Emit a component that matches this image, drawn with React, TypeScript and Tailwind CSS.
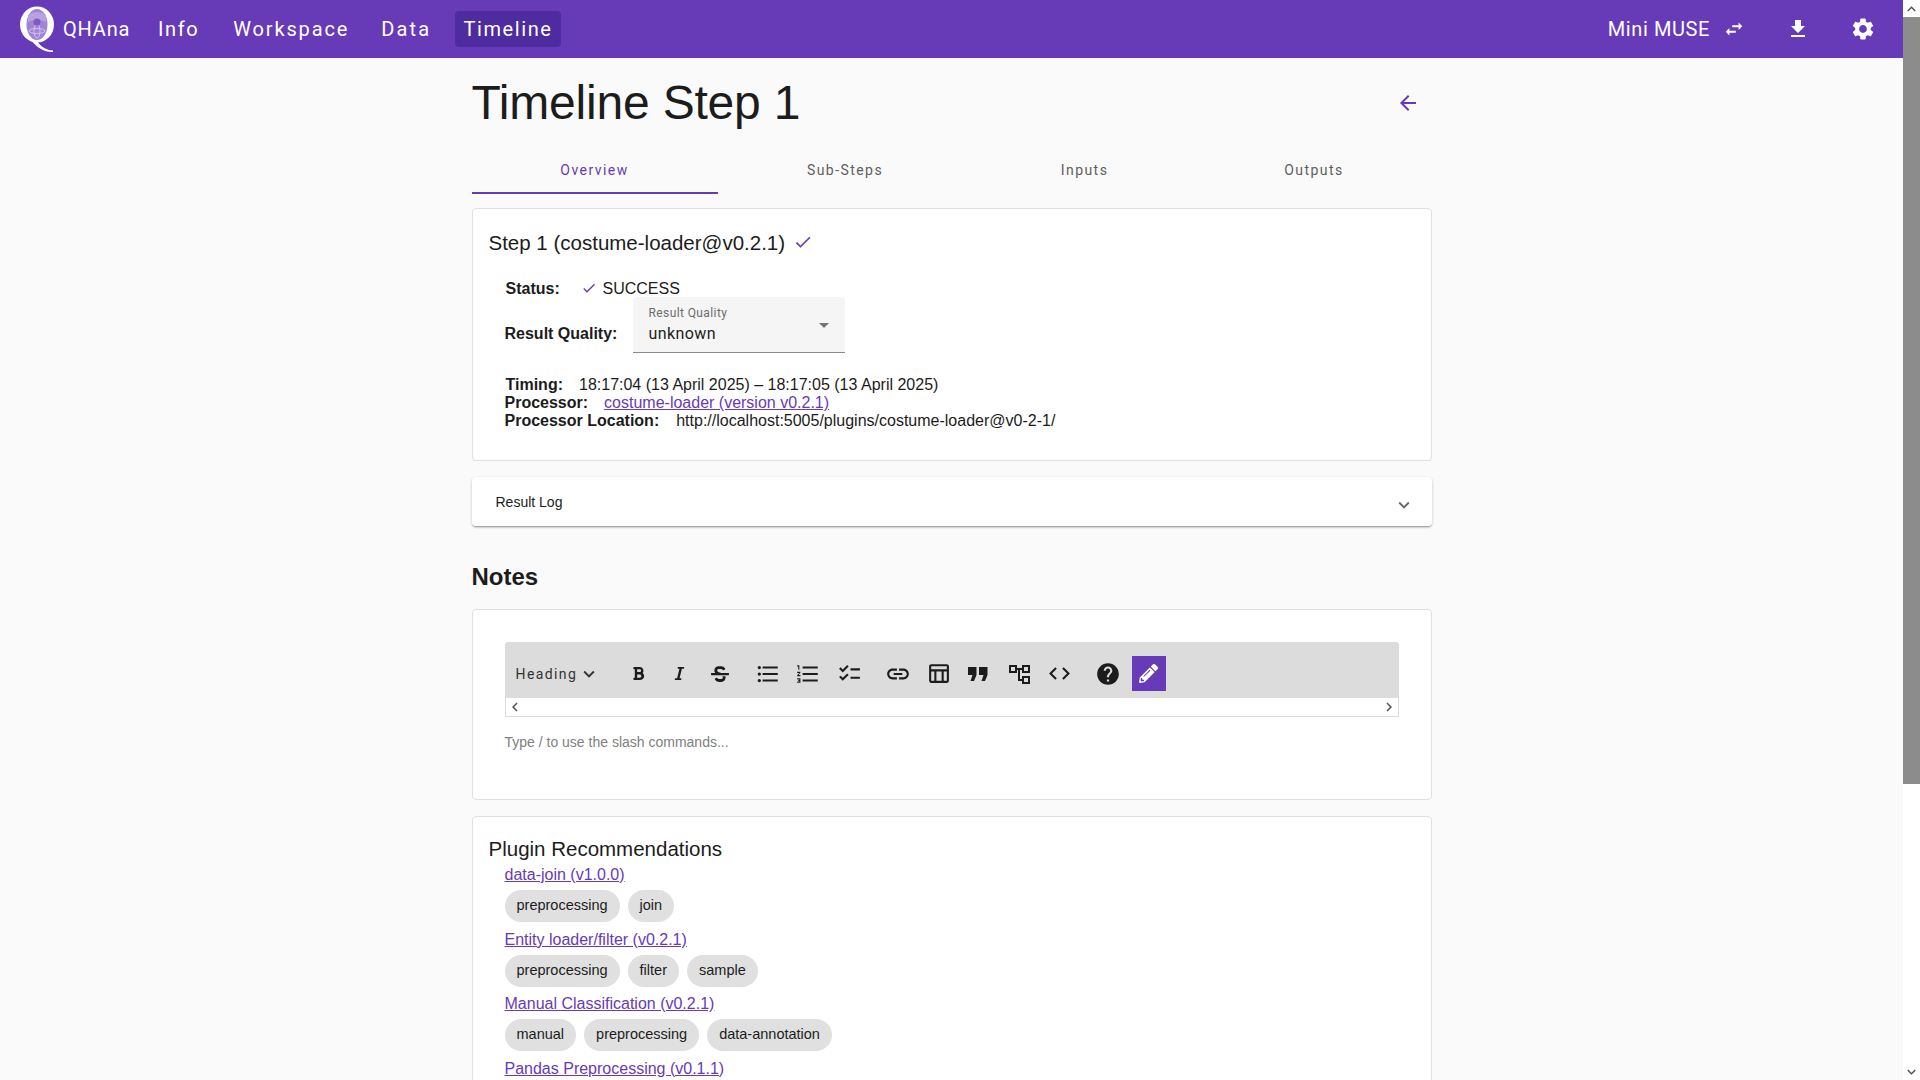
import React from "react";
import {
  MdSwapHoriz, MdFileDownload, MdSettings, MdArrowBack, MdCheck, MdKeyboardArrowDown, MdArrowDropDown,
  MdFormatListBulleted, MdFormatListNumbered, MdChecklist, MdLink, MdOutlineTableChart, MdCode, MdHelp,
  MdExpandMore, MdChevronLeft, MdChevronRight, MdExpandLess,
} from "react-icons/md";
import { FaBold, FaItalic, FaStrikethrough, FaPencilAlt } from "react-icons/fa";

const roboto = "font-['Roboto',sans-serif]";

function Logo() {
  return (
    <svg width="40" height="58" viewBox="0 0 40 58" className="shrink-0">
      <ellipse cx="20" cy="24.5" rx="17" ry="18" fill="#fff" />
      <path d="M20 41 C24 47 29 50 36 50.5 L36 52 C28 52.5 20 48 14 40 Z" fill="#fff" />
      <ellipse cx="20" cy="24.5" rx="10.5" ry="15.5" fill="#a184d6" />
      <path d="M11 15 Q20 9 29 15 L29 22 Q20 17 11 22 Z" fill="#b9a2e2" />
      <ellipse cx="20" cy="31" rx="8" ry="2.5" fill="none" stroke="#dccff2" strokeWidth="0.8" />
      <ellipse cx="20" cy="31" rx="3" ry="7" fill="none" stroke="#dccff2" strokeWidth="0.8" />
      <circle cx="20" cy="22" r="3.5" fill="#7d5cc0" />
    </svg>
  );
}

function TreeIcon() {
  return (
    <svg width="22" height="22" viewBox="0 0 22 22" fill="none" stroke="#1c1c1c" strokeWidth="2">
      <rect x="1" y="3" width="6" height="6" />
      <rect x="14" y="3" width="6" height="6" />
      <rect x="14" y="14" width="6" height="6" />
      <path d="M7 6h7M10 6v11h4" />
    </svg>
  );
}

function QuoteIcon() {
  return (
    <svg width="22" height="16" viewBox="0 0 22 16" fill="#1c1c1c">
      <path d="M1 1h8.5v8L7 15H3.5L5.5 9H1Z" />
      <path d="M12 1h8.5v8L18 15h-3.5l2-6H12Z" />
    </svg>
  );
}

function NavItem({ label, active, track = "tracking-[1.6px]" }: { label: string; active?: boolean; track?: string }) {
  return (
    <div className={`h-9 flex items-center px-2 rounded text-[20px] text-white ${track} ${active ? "bg-[#4f2ba0]" : ""}`}>{label}</div>
  );
}

function Chip({ label }: { label: string }) {
  return <div className="h-8 px-3 rounded-2xl bg-[#e0e0e0] flex items-center text-[14.5px] text-[#1c1c1c]">{label}</div>;
}

function Plugin({ name, tags }: { name: string; tags: string[] }) {
  return (
    <div className="pl-4">
      <a className="block text-[#673ab7] underline leading-[18px] text-base">{name}</a>
      <div className="flex gap-2 mt-[6px] mb-[8.5px]">
        {tags.map((t) => <Chip key={t} label={t} />)}
      </div>
    </div>
  );
}

function Tb({ children, className = "" }: { children: React.ReactNode; className?: string }) {
  return <div className={`w-[34px] h-[35px] flex items-center justify-center text-[#1c1c1c] shrink-0 ${className}`}>{children}</div>;
}

export default function App() {
  return (
    <div className="h-screen w-full overflow-hidden flex bg-[#fafafa] font-['Liberation_Sans',sans-serif] text-[#1c1c1c]">
      <div className="flex-1 min-w-0 flex flex-col">
        <header className={`h-[58px] shrink-0 bg-[#673ab7] flex items-center text-white ${roboto}`}>
          <div className="ml-[17px] w-[40px]"><Logo /></div>
          <div className="text-[20px] tracking-[0.8px] ml-[6px] w-[68px]">QHAna</div>
          <div className="ml-[19px] flex items-center gap-[16px]">
            <NavItem label="Info" />
            <div className="ml-[2px]"><NavItem label="Workspace" track="tracking-[1.85px]" /></div>
            <NavItem label="Data" track="tracking-[2.2px]" />
            <NavItem label="Timeline" active />
          </div>
          <div className="ml-auto flex items-center">
            <span className="text-[20px] tracking-[0.6px]">Mini MUSE</span>
            <MdSwapHoriz className="ml-[13px] text-[22px]" />
            <MdFileDownload className="ml-[41px] text-[24px]" />
            <MdSettings className="ml-[40px] mr-[27px] text-[26px]" />
          </div>
        </header>

        <main className="w-[960px] mx-auto shrink-0">
          <div className="h-[87px] flex items-center justify-between">
            <h1 className="text-[48px] leading-[56px] mt-[2px] tracking-[-0.2px]">Timeline Step 1</h1>
            <MdArrowBack className="text-[#673ab7] text-[24px] mr-[12px] mt-[2px]" />
          </div>
          <div className={`flex h-[49px] text-sm tracking-[1.45px] text-[#5e5e5e] ${roboto}`}>
            <div className="w-[246px] flex items-center justify-center pt-[3px] text-[#673ab7] border-b-2 border-[#673ab7]">Overview</div>
            <div className="w-[255px] flex items-center justify-center pt-[3px] border-b-2 border-transparent">Sub-Steps</div>
            <div className="w-[224px] flex items-center justify-center pt-[3px] border-b-2 border-transparent">Inputs</div>
            <div className="w-[235px] flex items-center justify-center pt-[3px] border-b-2 border-transparent">Outputs</div>
          </div>

          <section className="mt-[14px] h-[253px] bg-white border border-[#e0e0e0] rounded px-4 pt-[19px]">
            <div className="flex items-center h-[30px] text-[20.5px]">
              Step 1 (costume-loader@v0.2.1)
              <MdCheck className="ml-[8px] -mt-[2px] text-[#673ab7] text-[20px]" />
            </div>
            <div className="pl-4 mt-[21px] text-base">
              <div className="flex items-center h-[20px]">
                <b className="ml-px w-[75px]">Status:</b>
                <MdCheck className="text-[#673ab7] text-[16px] -mt-[2px]" />
                <span className="ml-[6px]">SUCCESS</span>
              </div>
              <div className="flex items-center">
                <b className="w-[128px] mt-[16px]">Result Quality:</b>
                <div className={`w-[212px] h-[56px] -mt-[2px] bg-[#f5f5f5] rounded-t border-b border-[#8a8a8a] px-4 relative ${roboto}`}>
                  <div className="text-xs tracking-[0.4px] text-[#6b6b6b] mt-[9px] leading-[15px]">Result Quality</div>
                  <div className="text-base tracking-[0.4px] leading-[24px] mt-[1px]">unknown</div>
                  <MdArrowDropDown className="absolute right-[9px] top-[16px] text-[#757575] text-[24px]" />
                </div>
              </div>
              <div className="mt-[23px] leading-[18px]">
                <div className="ml-px"><b>Timing:</b><span className="ml-[16px]">18:17:04 (13 April 2025) – 18:17:05 (13 April 2025)</span></div>
                <div><b>Processor:</b><a className="ml-[16px] text-[#673ab7] underline">costume-loader (version v0.2.1)</a></div>
                <div><b>Processor Location:</b><span className="ml-[17px]">http://localhost:5005/plugins/costume-loader@v0-2-1/</span></div>
              </div>
            </div>
          </section>

          <section className="mt-[16px] h-[49px] bg-white rounded flex items-center justify-between pl-6 pr-[17px] shadow-[0_2px_2px_-1px_rgba(0,0,0,0.3),0_1px_3px_rgba(0,0,0,0.2)]">
            <span className="text-sm">Result Log</span>
            <MdKeyboardArrowDown className="text-[#6b6b6b] text-[22px] mt-[6px]" />
          </section>

          <h2 className="mt-[35px] text-2xl font-bold leading-[32px] h-[48px]">Notes</h2>

          <section className="h-[191px] bg-white border border-[#e0e0e0] rounded px-8 pt-8">
            <div className="border-x border-b border-[#dcdcdc] rounded-t">
              <div className="bg-[#dcdcdc] h-[56px] flex items-center pl-[10px] pt-[7px] rounded-t -mx-px">
                <div className={`w-[107px] pl-px flex items-center text-sm tracking-[1.4px] ${roboto} text-[#333]`}>
                  Heading
                  <MdKeyboardArrowDown className="text-[22px] ml-[1px]" />
                </div>
                <Tb><FaBold className="text-[15px]" /></Tb>
                <Tb className="ml-[7px]"><FaItalic className="text-[15px]" /></Tb>
                <Tb className="ml-[6px]"><FaStrikethrough className="text-[18px]" /></Tb>
                <Tb className="ml-[14px]"><MdFormatListBulleted className="text-[26px]" /></Tb>
                <Tb className="ml-[6px]"><MdFormatListNumbered className="text-[26px]" /></Tb>
                <Tb className="ml-[8px]"><MdChecklist className="text-[25px]" /></Tb>
                <Tb className="ml-[14px]"><MdLink className="text-[26px]" /></Tb>
                <Tb className="ml-[7px]"><MdOutlineTableChart className="text-[25px]" /></Tb>
                <Tb className="ml-[5px]"><QuoteIcon /></Tb>
                <Tb className="ml-[8px]"><TreeIcon /></Tb>
                <Tb className="ml-[6px]"><MdCode className="text-[25px]" /></Tb>
                <Tb className="ml-[14px]"><MdHelp className="text-[26px]" /></Tb>
                <Tb className="ml-[7px] bg-[#673ab7] !text-white"><FaPencilAlt className="text-[19px]" /></Tb>
              </div>
              <div className="h-[18px] flex items-center justify-between text-[#555]">
                <MdChevronLeft className="text-[18px]" />
                <MdChevronRight className="text-[18px]" />
              </div>
            </div>
            <div className="mt-[15px] text-sm text-[#808080]">Type / to use the slash commands...</div>
          </section>

          <section className="mt-[16px] h-[400px] bg-white border border-[#e0e0e0] rounded px-4 pt-[18px]">
            <div className="text-[20.5px] leading-[28px] mb-[3px]">Plugin Recommendations</div>
            <Plugin name="data-join (v1.0.0)" tags={["preprocessing", "join"]} />
            <Plugin name="Entity loader/filter (v0.2.1)" tags={["preprocessing", "filter", "sample"]} />
            <Plugin name="Manual Classification (v0.2.1)" tags={["manual", "preprocessing", "data-annotation"]} />
            <Plugin name="Pandas Preprocessing (v0.1.1)" tags={[]} />
          </section>
        </main>
      </div>

      <div className="w-[17px] shrink-0 flex flex-col bg-white">
        <div className="h-[17px] flex items-center justify-center text-[#505050]"><MdExpandLess className="text-[18px]" /></div>
        <div className="h-[767px] bg-[#8c8c8c]" />
        <div className="flex-1" />
        <div className="h-[17px] flex items-center justify-center text-[#505050]"><MdExpandMore className="text-[18px]" /></div>
      </div>
    </div>
  );
}
